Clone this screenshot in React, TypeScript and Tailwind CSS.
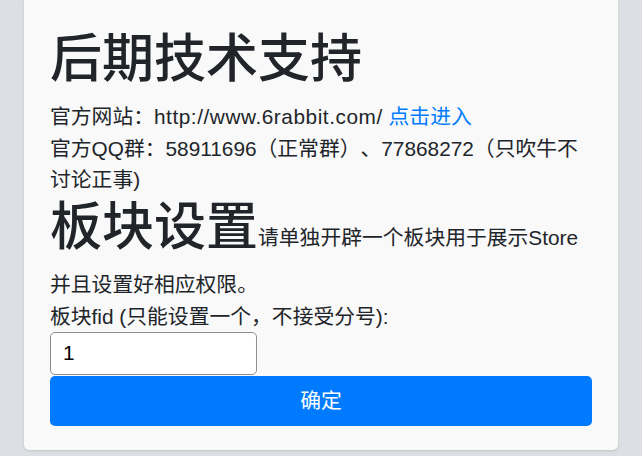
export default function App() {
  const font = { fontFamily: '"Liberation Sans", "Noto Sans CJK SC", sans-serif' };
  return (
    <div className="h-[456px] w-[642px] bg-[#dcdfe3] px-[24px] [text-spacing-trim:space-all]" style={font}>
      <div className="h-[450px] rounded-b-[5px] bg-[#f9f9f9] px-[26px] pt-[28px] text-[#212529] shadow-sm">
        <h1 className="mb-[11px] text-[52px] font-medium leading-[62.4px]">后期技术支持</h1>
        <div className="text-[20.8px] leading-[31.5px]">
          <div>
            官方网站：<span className="tracking-[0.55px]">http://www.6rabbit.com/</span>{' '}
            <a href="#" className="text-[#007bff]">
              点击进入
            </a>
          </div>
          <div>
            官方QQ群：58911696（正常群）、77868272（只吹牛不
            <br />
            讨论正事)
          </div>
        </div>
        <div className="flex items-baseline">
          <h2 className="text-[52px] font-medium leading-[62.4px]">板块设置</h2>
          <span className="text-[20.8px] leading-[31.2px]">请单独开辟一个板块用于展示Store</span>
        </div>
        <div className="mt-[11px] text-[20.8px] leading-[31.2px]">
          <div>并且设置好相应权限。</div>
          <div>板块fid (只能设置一个，不接受分号):</div>
        </div>
        <input
          defaultValue="1"
          className="block h-[43px] w-[207px] rounded-[5px] border border-[#8e8e8e] bg-white px-[12px] text-[20.8px] text-black outline-none"
        />
        <button className="mt-[1px] h-[50px] w-full rounded-[5px] bg-[#007bff] text-[20.8px] text-white">
          确定
        </button>
      </div>
    </div>
  );
}
